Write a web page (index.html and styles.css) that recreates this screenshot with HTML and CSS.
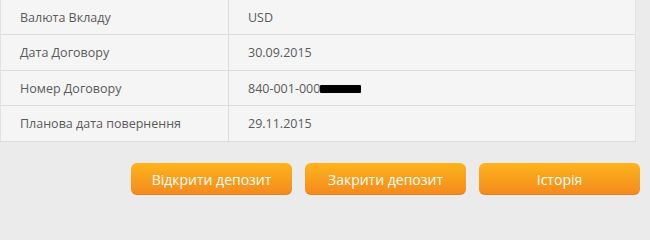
FILE: index.html
```html
<!DOCTYPE html>
<html lang="uk">
<head>
<meta charset="utf-8">
<link rel="stylesheet" href="styles.css">
</head>
<body>
<div class="page">
  <div class="details">
    <div class="row first"><div class="label">Валюта Вкладу</div><div class="value">USD</div></div>
    <div class="row"><div class="label">Дата Договору</div><div class="value">30.09.2015</div></div>
    <div class="row short"><div class="label">Номер Договору</div><div class="value">840-001-000<span class="redact"></span></div></div>
    <div class="row"><div class="label">Планова дата повернення</div><div class="value">29.11.2015</div></div>
  </div>
  <div class="actions">
    <button class="btn">Відкрити депозит</button>
    <button class="btn">Закрити депозит</button>
    <button class="btn">Історія</button>
  </div>
</div>
</body>
</html>
```
FILE: styles.css
```css
html, body {
  margin: 0;
  padding: 0;
  background: #ebebeb;
}
body {
  font-family: "Open Sans", "Noto Sans", sans-serif;
  width: 650px;
  height: 207px;
  overflow: hidden;
}
.details {
  width: 634px;
  background: #f5f5f5;
  border-left: 1px solid #e2e2e2;
  border-right: 1px solid #e2e2e2;
  border-bottom: 1px solid #dcdcdc;
}
.row {
  display: grid;
  grid-template-columns: 228px 1fr;
  height: 35px;
  border-top: 1px solid #dcdcdc;
  font-size: 12.5px;
  color: #5a5a5a;
}
.row.first {
  height: 34px;
  border-top: none;
}
.row.short {
  height: 34px;
}
.label, .value {
  display: flex;
  align-items: center;
  padding-left: 19px;
}
.label {
  border-right: 1px solid #dcdcdc;
}
.redact {
  display: inline-block;
  background: #000;
  height: 8px;
  width: 41px;
  margin-top: 2px;
  border-radius: 1px;
}
.actions {
  display: flex;
  justify-content: flex-end;
  gap: 13px;
  padding-right: 10px;
  margin-top: 21px;
}
.btn {
  width: 161px;
  height: 32px;
  border: none;
  border-radius: 6px;
  background: linear-gradient(#fdb41b, #f4891e);
  box-shadow: inset 0 -1px 0 rgba(200, 100, 0, 0.25);
  color: #fff;
  font-family: "Open Sans", "Noto Sans", sans-serif;
  font-size: 14px;
  padding: 0;
  cursor: pointer;
}
```
